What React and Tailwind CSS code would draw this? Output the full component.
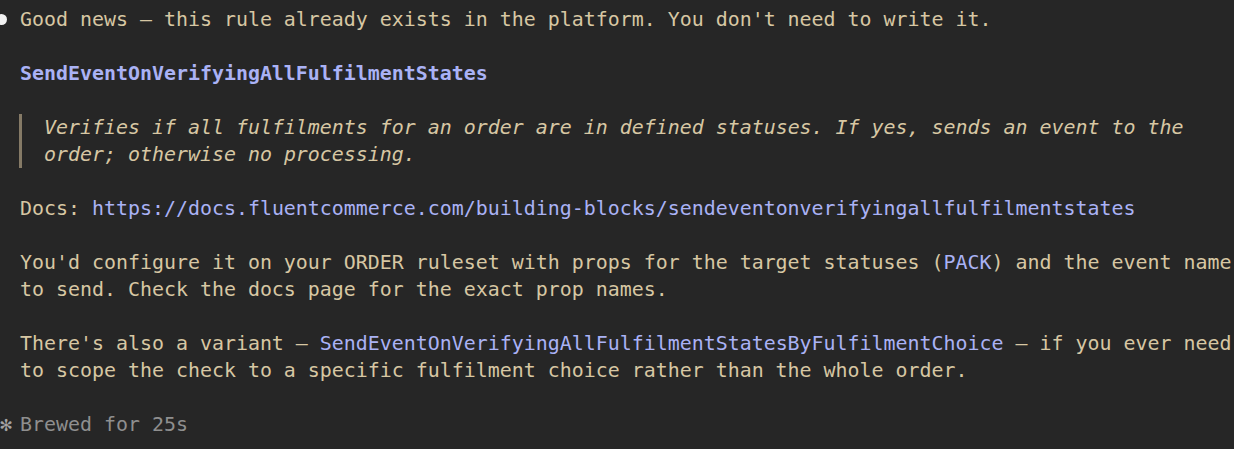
export default function App() {
  const line = 'whitespace-pre h-[27px]';

  return (
    <div className="w-[1234px] h-[449px] overflow-hidden bg-[#262626] pt-[6px] text-[19.93px] leading-[27px] text-[#d7c7a3] font-['DejaVu_Sans_Mono',monospace]">
      {/* answer */}
      <div className="flex">
        <div className="w-[20px] h-[27px] shrink-0 flex items-center">
          <span className="block w-[11px] h-[11px] rounded-full bg-[#f2f2f2] -ml-[4px]" />
        </div>
        <div className={line}>Good news — this rule already exists in the platform. You don't need to write it.</div>
      </div>

      <div className="h-[27px]" />

      <div className="pl-[20px]">
        <div className={`${line} font-bold text-[#aab2f5]`}>SendEventOnVerifyingAllFulfilmentStates</div>
      </div>

      <div className="h-[27px]" />

      {/* blockquote */}
      <div className="pl-[19px]">
        <div className="border-l-[3px] border-[#857a66] pl-[22px] italic">
          <div className={line}>Verifies if all fulfilments for an order are in defined statuses. If yes, sends an event to the</div>
          <div className={line}>order; otherwise no processing.</div>
        </div>
      </div>

      <div className="h-[27px]" />

      <div className="pl-[20px]">
        <div className={line}>
          Docs: <span className="text-[#aab2f5]">https://docs.fluentcommerce.com/building-blocks/sendeventonverifyingallfulfilmentstates</span>
        </div>
      </div>

      <div className="h-[27px]" />

      <div className="pl-[20px]">
        <div className={line}>
          You'd configure it on your ORDER ruleset with props for the target statuses (<span className="text-[#aab2f5]">PACK</span>) and the event name
        </div>
        <div className={line}>to send. Check the docs page for the exact prop names.</div>
      </div>

      <div className="h-[27px]" />

      <div className="pl-[20px]">
        <div className={line}>
          There's also a variant — <span className="text-[#aab2f5]">SendEventOnVerifyingAllFulfilmentStatesByFulfilmentChoice</span> — if you ever need
        </div>
        <div className={line}>to scope the check to a specific fulfilment choice rather than the whole order.</div>
      </div>

      <div className="h-[27px]" />

      {/* status */}
      <div className="flex text-[#8f8f8f]">
        <div className="w-[20px] h-[27px] shrink-0 text-[#a3a3a3]">✻</div>
        <div className={line}>Brewed for 25s</div>
      </div>
    </div>
  );
}
